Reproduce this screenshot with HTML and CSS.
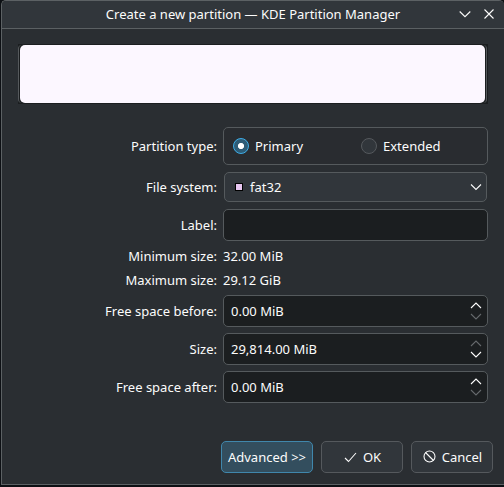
FILE: index.html
```
<!DOCTYPE html>
<html lang="en">
<head>
<meta charset="utf-8">
<title>Create a new partition</title>
<link rel="stylesheet" href="styles.css">
</head>
<body>
<div class="window">
  <header class="titlebar">
    <span class="title">Create a new partition — KDE Partition Manager</span>
    <div class="controls">
      <svg width="12" height="12" viewBox="0 0 12 12"><path d="M.7 3.5 6 8.7 11.3 3.5"/></svg>
      <svg width="12" height="12" viewBox="0 0 12 12"><path d="M1.5 1.5 10.5 10.5M10.5 1.5 1.5 10.5"/></svg>
    </div>
  </header>
  <main class="content">
    <div class="partition"><div class="partition-frame"><div class="partition-fill"></div></div></div>
    <div class="form">
      <span class="label">Partition type:</span>
      <div class="group">
        <span class="option"><i class="radio checked"></i>Primary</span>
        <span class="option"><i class="radio"></i>Extended</span>
      </div>
      <span class="label">File system:</span>
      <div class="combo"><i class="swatch"></i><span>fat32</span>
        <svg width="12" height="8" viewBox="0 0 12 8"><path d="M1 1.5 6 6.5 11 1.5"/></svg>
      </div>
      <span class="label">Label:</span>
      <div class="field"></div>
      <span class="label">Minimum size:</span><span class="value">32.00 MiB</span>
      <span class="label">Maximum size:</span><span class="value">29.12 GiB</span>
      <span class="label">Free space before:</span>
      <div class="field"><span>0.00 MiB</span>
        <svg width="12" height="20" viewBox="0 0 12 20"><path d="M1 7 6 2 11 7"/><path class="off" d="M1 13 6 18 11 13"/></svg>
      </div>
      <span class="label">Size:</span>
      <div class="field"><span>29,814.00 MiB</span>
        <svg width="12" height="20" viewBox="0 0 12 20"><path class="off" d="M1 7 6 2 11 7"/><path d="M1 13 6 18 11 13"/></svg>
      </div>
      <span class="label">Free space after:</span>
      <div class="field"><span>0.00 MiB</span>
        <svg width="12" height="20" viewBox="0 0 12 20"><path d="M1 7 6 2 11 7"/><path class="off" d="M1 13 6 18 11 13"/></svg>
      </div>
    </div>
    <footer class="buttons">
      <div class="button advanced">Advanced &gt;&gt;</div>
      <div class="button ok"><svg width="16" height="16" viewBox="0 0 16 16"><path d="M2 9 5.5 12.5 13 4"/></svg>OK</div>
      <div class="button cancel"><svg width="16" height="16" viewBox="0 0 16 16"><circle cx="7.5" cy="7.5" r="5.5"/><path d="M3.5 3.5 11.5 11.5"/></svg>Cancel</div>
    </footer>
  </main>
</div>
</body>
</html>
```
FILE: styles.css
```
* { box-sizing: border-box; }
body {
  margin: 0;
  height: 487px;
  overflow: hidden;
  padding-left: 1px;
  background: #0d1014;
  color: #fcfcfc;
  font: 13px/18px "Noto Sans", sans-serif;
}
svg { fill: none; stroke: #fcfcfc; stroke-width: 1.08; flex: none; }
.off { stroke: #64686b; }
.window {
  width: 503px;
  height: 485px;
  border: 1px solid #5c6164;
  border-right: 0;
  border-radius: 5px 5px 0 0;
  background: #2a2e32;
  overflow: hidden;
}
.titlebar {
  display: flex;
  align-items: center;
  height: 28px;
  padding: 0 9px 1px 0;
  border-bottom: 1px solid #5b6063;
  background: #31363b;
}
.title { flex: 1; padding-left: 53px; text-align: center; white-space: nowrap; }
.controls { display: flex; gap: 12px; margin-left: 8px; }
.content { padding: 15px 11px 0 16px; }
.partition {
  width: 470px;
  height: 60px;
  padding: 1px 1px 1px 0;
  background: #1b1e20;
}
.partition-frame {
  height: 58px;
  border: solid #55595c;
  border-width: 0 1px;
  border-radius: 4px;
  padding: 0 1px;
}
.partition-fill { height: 58px; border-radius: 5px; background: #fcf7ff; }
.form {
  display: grid;
  grid-template-columns: 199px 265px;
  grid-template-rows: 38px 32px 32px 18px 18px 32px 32px 32px;
  gap: 6px;
  align-items: center;
  margin-top: 23px;
}
.label { text-align: right; }
.group, .combo, .field {
  display: flex;
  align-items: center;
  border: 1px solid #555a5d;
  border-radius: 5px;
}
.group { height: 38px; padding-left: 9px; background: #292c30; }
.option { display: flex; align-items: center; gap: 6px; }
.option:first-child { flex: 0 0 128px; }
.radio {
  width: 16px;
  height: 16px;
  border: 1px solid #55595d;
  border-radius: 50%;
  background: #31363b;
}
.radio.checked { border-color: #3daee9; background: radial-gradient(circle, #fff 2.7px, #2e5c76 3.5px); }
.combo {
  height: 30px;
  margin: 0 1px;
  padding: 0 4px 0 10px;
  background: #31363b;
}
.combo span { flex: 1; padding-left: 7px; }
.swatch { width: 8px; height: 8px; border: 1px solid #000; background: #e7c6f1; }
.field {
  height: 32px;
  justify-content: space-between;
  padding: 0 5px 0 7px;
  background: #1b1e20;
}
.buttons { display: flex; justify-content: flex-end; gap: 8px; margin-top: 38px; }
.button {
  display: flex;
  align-items: center;
  justify-content: center;
  height: 32px;
  width: 82px;
  gap: 4px;
  border: 1px solid #55595d;
  border-radius: 5px;
  background: #31363b;
}
.button.advanced { width: 92px; border-color: #4087ac; background: #334e5e; }
```
